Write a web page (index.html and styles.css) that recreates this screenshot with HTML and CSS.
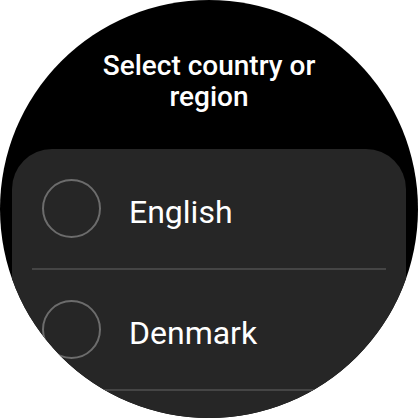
FILE: index.html
```html
<!DOCTYPE html>
<html lang="en">
<head>
  <meta charset="UTF-8" />
  <meta name="viewport" content="width=device-width, initial-scale=1.0"/>
  <title>Select country or region</title>
  <link rel="stylesheet" href="styles.css">
</head>
<body>

  <div class="watch">
    <h1 class="title">Select country or region</h1>

    <div class="list">
      <div class="row">
        <span class="radio"></span>
        <span class="label">English</span>
      </div>
      <div class="row">
        <span class="radio"></span>
        <span class="label">Denmark</span>
      </div>
    </div>
  </div>

</body>
</html>
```

FILE: styles.css
```css
body {
  margin: 0;
  padding: 0;
  background-color: #fff;
  font-family: Roboto, 'Noto Sans', sans-serif;
}
.watch {
  width: 418px;
  height: 418px;
  border-radius: 50%;
  background-color: #000;
  overflow: hidden;
}
.title {
  margin: 0 auto;
  padding-top: 50px;
  width: 250px;
  color: #fff;
  font-size: 28px;
  font-weight: 500;
  line-height: 31px;
  text-align: center;
}
.list {
  margin: 37px 12px 0;
  padding-bottom: 60px;
  background-color: #262626;
  border-radius: 40px;
}
.row {
  display: flex;
  align-items: center;
  height: 119px;
  margin: 0 20px;
  padding-left: 10px;
  border-bottom: 2px solid #454545;
}
.radio {
  width: 55px;
  height: 55px;
  border: 2px solid #6c6c6c;
  border-radius: 50%;
  flex-shrink: 0;
}
.label {
  margin-left: 28px;
  padding-top: 6px;
  color: #fff;
  font-size: 32px;
}
```
